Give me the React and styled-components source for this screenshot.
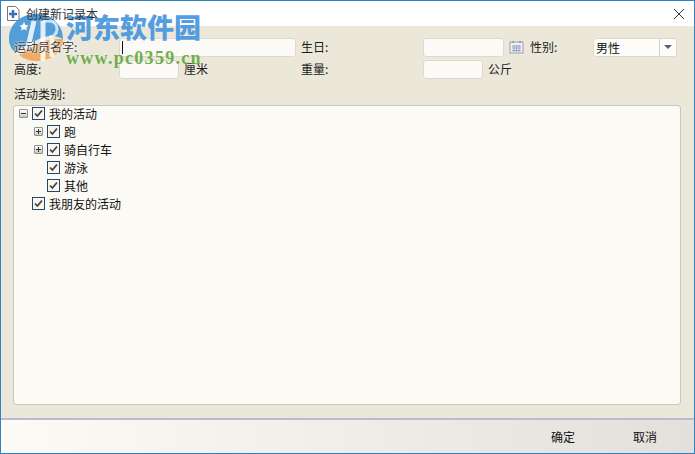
import React from "react";
import styled, { createGlobalStyle } from "styled-components";

const Global = createGlobalStyle`
  html, body { margin: 0; padding: 0; background: #fff; }
  body { font-family: "Noto Sans CJK SC", "Liberation Sans", sans-serif; font-size: 12px; color: #1c1c1c; }
`;
const Win = styled.div`
  position: relative; box-sizing: border-box; width: 695px; height: 454px;
  border: 1px solid #2b83c2; display: flex; flex-direction: column; overflow: hidden; background: #ebe8da;
`;
const TitleBar = styled.header`
  height: 25px; background: #fff; display: flex; align-items: center; flex: none;
  padding: 0 9px 0 5px; gap: 6px; font-size: 12px; color: #333;
`;
const TitleText = styled.span`flex: 1; line-height: 25px; position: relative; z-index: 2;`;
const Body = styled.main`
  flex: 1; min-height: 0; display: flex; flex-direction: column; padding: 11px 13px 13px 12px;
`;
const Row = styled.div`display: flex; align-items: center; height: 20px; margin-bottom: 2px; padding-left: 1px;`;
const Label = styled.label`
  width: ${p => p.$w}px; flex: none; line-height: 20px; white-space: nowrap; box-sizing: border-box;
  padding-left: ${p => p.$pad || 0}px;
`;
const OverLabel = styled(Label)`
  position: relative; z-index: 2; color: #3a3a3a; text-shadow: 0 0 2px #fff, 0 0 2px #fff;
`;
const Input = styled.div`
  box-sizing: border-box; width: ${p => p.$w}px; height: 19px; flex: none; background: #fbfaf6;
  border: 1px solid #dcdad0; border-radius: 3px; display: flex; align-items: center; padding-left: 2px;
`;
const Caret = styled.span`width: 1px; height: 13px; background: #111;`;
const Unit = styled.span`width: ${p => p.$w}px; flex: none; margin-left: 5px; line-height: 20px;`;
const Cal = styled.svg`width: 15px; height: 14px; margin: 0 6px 0 5px; flex: none;`;
const Select = styled.div`
  box-sizing: border-box; width: 84px; height: 19px; background: #fdfcf9; border: 1px solid #dcdad0;
  border-radius: 3px; display: flex; align-items: center; padding-left: 2px; color: #111;
`;
const SelectText = styled.span`flex: 1;`;
const Arrow = styled.span`
  width: 16px; height: 17px; border-left: 1px solid #cfd0d4; display: flex; align-items: center; justify-content: center;
  &::after { content: ""; border: 4px solid transparent; border-top: 4px solid #55607a; border-bottom: 0; }
`;
const Section = styled.div`line-height: 18px; margin: 4px 0 2px; padding-left: 1px;`;
const Tree = styled.div`
  flex: 1; min-height: 0; box-sizing: border-box; background: #fbfaf5; border: 1px solid #c6c6c4; border-radius: 3px;
  padding: 0 0 0 2px;
`;
const Node = styled.div`
  box-sizing: border-box; height: 18px; padding-bottom: 4px; display: flex; align-items: center;
  padding-left: ${p => p.$level * 15}px; color: #111; white-space: nowrap;
`;
const Toggle = styled.span`
  box-sizing: border-box; width: 9px; height: 9px; margin: 0 3px; flex: none; position: relative;
  border: 1px solid #8e8f8f; border-radius: 1px; background: linear-gradient(#fff, #c9c9c4);
  visibility: ${p => (p.$hidden ? "hidden" : "visible")};
  &::before { content: ""; position: absolute; left: 1px; top: 3px; width: 5px; height: 1px; background: #333; }
  &::after { content: ""; display: ${p => (p.$open ? "none" : "block")}; position: absolute; left: 3px; top: 1px; width: 1px; height: 5px; background: #333; }
`;
const Check = styled.span`
  box-sizing: border-box; width: 13px; height: 13px; flex: none; margin: 0 4px 0 1px; background: #f7f6f1;
  border: 1px solid #24476b; display: flex; align-items: center; justify-content: center;
`;
const Footer = styled.footer`
  height: 35px; box-sizing: border-box; flex: none; border-top: 2px solid #b9b8da; display: flex; align-items: center; justify-content: flex-end;
  padding-right: 8px; background: linear-gradient(90deg, #fcfbf6, #e3e0db);
`;
const FootBtn = styled.button`
  all: unset; width: 82px; text-align: center; font-size: 12px; color: #111; line-height: 30px; font-family: inherit;
`;
const Mark = styled.div`position: absolute; z-index: 1; left: 4px; top: 5px; width: 215px; height: 70px; pointer-events: none;`;
const MarkLogo = styled.svg`position: absolute; left: 1px; top: 5px; width: 60px; height: 60px;`;
const MarkCn = styled.div`
  position: absolute; left: 61px; top: 4px; font: 900 27px/34px "Noto Sans CJK SC", sans-serif; color: rgba(67,150,222,.92); white-space: nowrap;
`;
const MarkEn = styled.div`
  position: absolute; left: 61px; top: 42px; font: bold 18px/20px "Liberation Serif", serif; color: rgba(98,168,58,.92); letter-spacing: 1.3px; white-space: nowrap;
`;

const Tick = () => (
  <svg width="9" height="9" viewBox="0 0 9 9"><path d="M1 4.500 3.400 7 8 1.500" fill="none" stroke="#4b4338" strokeWidth="1.8" /></svg>
);
const Item = ({ level, toggle, open, text }) => (
  <Node $level={level}>
    <Toggle $hidden={!toggle} $open={open} />
    <Check><Tick /></Check>
    {text}
  </Node>
);

export default function App() {
  return (
    <Win>
      <Global />
      <TitleBar>
        <svg width="14" height="15" viewBox="0 0 14 15">
          <path d="M1.500.5h8l3.500 3.500v10.500h-11.500z" fill="#fff" stroke="#777" />
          <path d="M7 4v8M3 8h8" stroke="#3d6fb5" strokeWidth="2.500" />
        </svg>
        <TitleText>创建新记录本</TitleText>
        <svg width="12" height="12" viewBox="0 0 12 12"><path d="M1 1 11 11M11 1 1 11" stroke="#333" strokeWidth="1" /></svg>
      </TitleBar>
      <Body>
        <Row>
          <OverLabel $w={105}>运动员名字:</OverLabel>
          <Input $w={177}><Caret /></Input>
          <Label $w={127} $pad={5}>生日:</Label>
          <Input $w={81} />
          <Cal viewBox="0 0 15 14">
            <rect x="1" y="2" width="13" height="11" fill="#eef0f4" stroke="#9a9fa8" />
            <path d="M4 1v2M11 1v2" stroke="#777" />
            <path d="M3 6h9M3 8h9M3 10.500h9M5 5v7M7.500 5v7M10 5v7" stroke="#8c98c0" strokeWidth=".8" />
          </Cal>
          <Label $w={63}>性别:</Label>
          <Select><SelectText>男性</SelectText><Arrow /></Select>
        </Row>
        <Row>
          <Label $w={105}>高度:</Label>
          <Input $w={60} />
          <Unit $w={112}>厘米</Unit>
          <Label $w={5} />
          <Label $w={122}>重量:</Label>
          <Input $w={60} />
          <Unit $w={50}>公斤</Unit>
        </Row>
        <Section>活动类别:</Section>
        <Tree>
          <Item level={0} toggle open text="我的活动" />
          <Item level={1} toggle text="跑" />
          <Item level={1} toggle text="骑自行车" />
          <Item level={1} text="游泳" />
          <Item level={1} text="其他" />
          <Item level={0} text="我朋友的活动" />
        </Tree>
      </Body>
      <Footer>
        <FootBtn>确定</FootBtn>
        <FootBtn>取消</FootBtn>
      </Footer>
      <Mark>
        <MarkLogo viewBox="5 10 60 60">
          <path d="M8 38C8 23 20 13 35 13s27 10 27 25c-8-4-16-4-24 0-9 4-17 9-24 13-4-3-6-8-6-13z" fill="rgba(65,150,215,.9)" />
          <path d="M38 42c8-4 16-4 24-4 0 12-11 22-26 22-7 0-13-2-18-6 6-4 13-8 20-12z" fill="rgba(240,160,75,.85)" />
          <path d="M33 20 27 46M42 20V60M51 38V56" stroke="rgba(255,255,255,.82)" strokeWidth="5" fill="none" />
          <path d="M42 20h6c6 0 8 4 8 8s-3 8-8 8" stroke="rgba(255,255,255,.7)" strokeWidth="3" fill="none" />
          <path d="M23 21l1.500 3 3 .5-2.200 2 .6 3-2.900-1.500-2.900 1.500.6-3-2.200-2 3-.5z" fill="#fff" />
        </MarkLogo>
        <MarkCn>河东软件园</MarkCn>
        <MarkEn>www.pc0359.cn</MarkEn>
      </Mark>
    </Win>
  );
}
